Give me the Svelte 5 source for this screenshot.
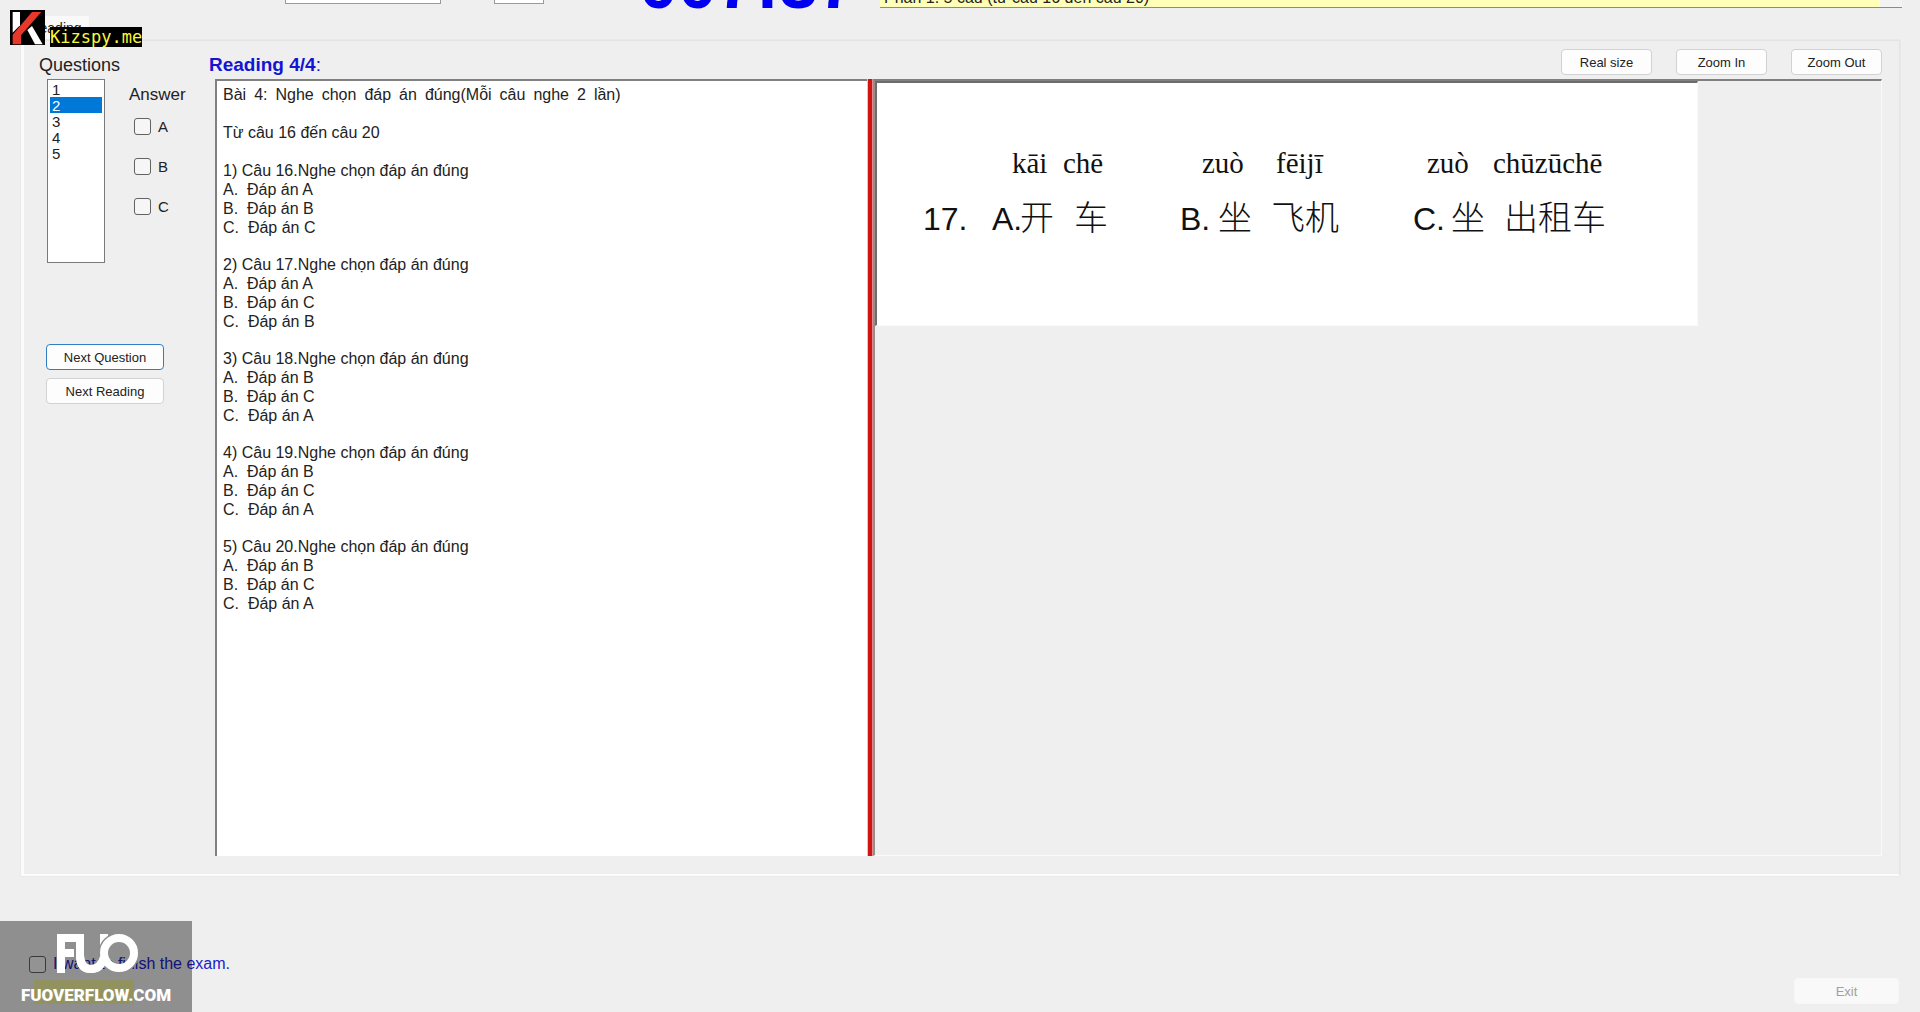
<script>
  let selected = $state([2]);
  let answers = $state({ A: false, B: false, C: false });
  let finish = $state(false);

  const numbers = [1, 2, 3, 4, 5];

  const questions = [
    { no: 16, options: ["A", "B", "C"] },
    { no: 17, options: ["A", "C", "B"] },
    { no: 18, options: ["B", "C", "A"] },
    { no: 19, options: ["B", "C", "A"] },
    { no: 20, options: ["B", "C", "A"] },
  ];

  const letters = ["A", "B", "C"];

  const pinyin = [
    { x: 135, text: "kāi" },
    { x: 186, text: "chē" },
    { x: 325, text: "zuò" },
    { x: 399, text: "fēijī" },
    { x: 550, text: "zuò" },
    { x: 616, text: "chūzūchē" },
  ];

  const latin = [
    { x: 46, text: "17." },
    { x: 115, text: "A." },
    { x: 303, text: "B." },
    { x: 536, text: "C." },
  ];

  const hanzi = [
    { x: 143, text: "开" },
    { x: 197, text: "车" },
    { x: 341, text: "坐" },
    { x: 394, text: "飞机" },
    { x: 574, text: "坐" },
    { x: 627, text: "出租车" },
  ];
</script>

<div class="app">
  <header class="top">
    <select class="combo combo-font" aria-label="Font"></select>
    <select class="combo combo-size" aria-label="Size"></select>
    <div class="timer">007:37</div>
    <div class="notes">
      <p>Phần 1: 5 câu (từ câu 16 đến câu 20)</p>
      <div class="notes-scroll"></div>
    </div>
  </header>

  <nav class="tabs">
    <button class="tab">Reading</button>
  </nav>

  <main class="panel">
    <aside class="side">
      <label class="side-title" for="question-list">Questions</label>
      <div class="side-body">
        <select id="question-list" class="question-list" multiple size="5" bind:value={selected}>
          {#each numbers as number}
            <option value={number}>{number}</option>
          {/each}
        </select>
        <div class="answers">
          <h2>Answer</h2>
          {#each letters as letter}
            <label class="answer">
              <input class="tick" type="checkbox" bind:checked={answers[letter]} />
              {letter}
            </label>
          {/each}
        </div>
      </div>
      <div class="side-buttons">
        <button class="btn btn-focus">Next Question</button>
        <button class="btn">Next Reading</button>
      </div>
    </aside>

    <section class="work">
      <div class="toolbar">
        <h1>Reading 4/4<span>:</span></h1>
        <div class="zoom">
          <button class="btn">Real size</button>
          <button class="btn">Zoom In</button>
          <button class="btn">Zoom Out</button>
        </div>
      </div>

      <div class="split">
        <article class="reading">
          <p>Bài&ensp;4:&ensp;Nghe&ensp;chọn&ensp;đáp&ensp;án&ensp;đúng(Mỗi&ensp;câu&ensp;nghe&ensp;2&ensp;lần)</p>
          <p>Từ câu 16 đến câu 20</p>
          {#each questions as question, i}
            <div class="question">
              <div>{i + 1}) Câu {question.no}.Nghe chọn đáp án đúng</div>
              {#each question.options as option, j}
                <div>{letters[j]}.&nbsp; Đáp án {option}</div>
              {/each}
            </div>
          {/each}
        </article>
        <div class="splitter"></div>
        <div class="viewer">
          <div class="sheet">
            <svg width="820" height="242" viewBox="0 0 820 242">
              {#each pinyin as word}
                <text class="pinyin" x={word.x} y="90">{word.text}</text>
              {/each}
              {#each latin as word}
                <text class="latin" x={word.x} y="147">{word.text}</text>
              {/each}
              {#each hanzi as word}
                <text class="hanzi" x={word.x} y="147">{word.text}</text>
              {/each}
            </svg>
          </div>
        </div>
      </div>
    </section>
  </main>

  <footer class="bottom">
    <div class="finish">
      <label class="finish-label">
        <input class="tick" type="checkbox" bind:checked={finish} />
        I want to finish the exam.
      </label>
      <div class="finish-bar"></div>
    </div>
    <button class="btn exit" disabled>Exit</button>
  </footer>

  <div class="kizspy">
    <svg width="35" height="35" viewBox="0 0 105 105">
      <rect width="105" height="105" fill="#000" />
      <path d="M8 6H30V46L8 68Z" fill="#fff" />
      <path d="M66 6H94L33 76V103H8V74Z" fill="#e8382b" />
      <path d="M52 60L66 48L98 103H75Z" fill="#fff" />
    </svg>
    <span>Kizspy.me</span>
  </div>

  <div class="fuo">
    <svg width="84" height="42" viewBox="0 0 84 42">
      <path d="M3 1H23V9H11V16H20V24H11V40H3Z" fill="#fff" />
      <path d="M26 1V22Q26 36 37 36Q47 36 50 24V1" fill="none" stroke="#fff" stroke-width="8" />
      <circle cx="65" cy="20" r="17" fill="none" stroke="#8f8f8f" stroke-width="7" />
      <circle cx="65" cy="20" r="15" fill="none" stroke="#fff" stroke-width="8" />
      <path d="M26 22Q26 36 37 36Q47 36 50 24" fill="none" stroke="#fff" stroke-width="8" />
    </svg>
    <span>FUOVERFLOW.COM</span>
  </div>
</div>

<style>
  :global(body) {
    margin: 0;
    background: #efefef;
  }

  .app {
    position: relative;
    display: flex;
    flex-direction: column;
    min-height: 100vh;
    overflow: hidden;
    background: #efefef;
    color: #222;
    font-family: "Liberation Sans", Arial, sans-serif;
    font-size: 16px;
  }

  h1,
  h2,
  p {
    margin: 0;
  }

  .top {
    display: flex;
    align-items: flex-end;
    height: 16px;
    padding: 0 18px 0 285px;
    overflow: hidden;
  }

  .combo {
    flex: none;
    box-sizing: border-box;
    height: 24px;
    margin: 0 0 12px;
    border: 1px solid #9a9a9a;
    border-radius: 0;
    background: #fff;
  }

  .combo-font {
    width: 156px;
  }

  .combo-size {
    width: 50px;
    margin-left: 53px;
  }

  .timer {
    flex: none;
    width: 241px;
    margin-left: 95px;
    color: #0000f0;
    font-size: 70px;
    font-weight: bold;
    line-height: 64px;
  }

  .notes {
    flex: 1;
    display: flex;
    height: 40px;
    margin-bottom: 8px;
    border-bottom: 1px solid #8a8a8a;
    background: #ffffb8;
  }

  .notes p {
    flex: 1;
    align-self: flex-end;
    padding-left: 4px;
    line-height: 18px;
    font-size: 16px;
  }

  .notes-scroll {
    width: 22px;
    background: #f3f3f3;
  }

  .tabs {
    height: 24px;
    padding-left: 22px;
  }

  .tab {
    width: 67px;
    height: 24px;
    padding: 0;
    border: 0;
    background: #f9f9f9;
    color: #222;
    font: 14px "Liberation Sans", Arial, sans-serif;
  }

  .panel {
    flex: 1;
    display: grid;
    grid-template-columns: 185px 1fr;
    margin: 0 20px 0 21px;
    padding: 0 17px 18px 0;
    border: 1px solid #e4e4e4;
    border-left: 3px solid #fbfbfb;
    border-bottom: 2px solid #fbfbfb;
    box-shadow: 0 0 0 1px #e9e9e9;
  }

  .side-title {
    display: block;
    height: 38px;
    padding-left: 15px;
    font-size: 18px;
    line-height: 48px;
  }

  .side-body {
    display: flex;
    gap: 24px;
    padding-left: 23px;
  }

  .question-list {
    box-sizing: border-box;
    width: 58px;
    height: 184px;
    padding: 1px 2px;
    border: 1px solid #7a7a7a;
    border-radius: 0;
    outline: 0;
    overflow: hidden;
    background: #fff;
    font: 15px "Liberation Sans", Arial, sans-serif;
  }

  .question-list option {
    box-sizing: border-box;
    height: 16px;
    min-height: 0;
    padding: 0 2px;
    color: #222;
    line-height: 16px;
  }

  .question-list option:checked {
    background: #0078d7 linear-gradient(#0078d7, #0078d7);
    color: #fff;
  }

  .answers {
    padding-top: 4px;
  }

  .answers h2 {
    margin-bottom: 2px;
    font-size: 17px;
    font-weight: normal;
    line-height: 24px;
  }

  .answer {
    display: flex;
    align-items: center;
    gap: 7px;
    height: 34px;
    margin-bottom: 6px;
    padding-left: 5px;
    font-size: 15px;
  }

  .tick {
    appearance: none;
    flex: none;
    box-sizing: border-box;
    width: 17px;
    height: 17px;
    margin: 0;
    border: 1px solid #626262;
    border-radius: 3px;
    background: #f6f6f6;
  }

  .tick:checked {
    background: #0078d7;
  }

  .side-buttons {
    display: grid;
    gap: 8px;
    width: 118px;
    padding: 81px 0 0 22px;
  }

  .btn {
    height: 26px;
    padding: 0;
    border: 1px solid #d2d2d2;
    border-radius: 4px;
    background: #fdfdfd;
    color: #222;
    font: 13px "Liberation Sans", Arial, sans-serif;
  }

  .btn-focus {
    border-color: #2f7fc4;
  }

  .work {
    display: flex;
    flex-direction: column;
  }

  .toolbar {
    display: flex;
    justify-content: space-between;
    height: 38px;
  }

  .toolbar h1 {
    color: #1414d2;
    font-size: 19px;
    line-height: 48px;
  }

  .toolbar h1 span {
    font-weight: normal;
  }

  .zoom {
    display: flex;
    gap: 24px;
    padding-top: 8px;
  }

  .zoom .btn {
    width: 91px;
  }

  .split {
    flex: 1;
    display: grid;
    grid-template-columns: 652fr 6px 1008fr;
    padding-left: 6px;
  }

  .reading {
    padding: 4px 6px;
    border-top: 2px solid #808080;
    border-left: 2px solid #808080;
    background: #fff;
    line-height: 19px;
  }

  .reading p {
    margin-bottom: 19px;
  }

  .question {
    margin-bottom: 18px;
  }

  .splitter {
    border-right: 1px solid #e08a8a;
    border-left: 1px solid #f0c0c0;
    background: #cf1414;
  }

  .viewer {
    border: 1px solid #fafafa;
    border-top: 2px solid #808080;
    border-left: 2px solid #909090;
  }

  .sheet {
    width: 820px;
    max-width: 100%;
    border: 1px solid #fafafa;
    border-top: 2px solid #6c6c6c;
    border-left: 2px solid #6c6c6c;
    background: #fff;
  }

  .sheet svg {
    display: block;
    max-width: 100%;
  }

  .pinyin {
    fill: #111;
    font-family: "Liberation Serif", "Times New Roman", serif;
    font-size: 29px;
  }

  .latin {
    fill: #111;
    font-size: 32px;
  }

  .hanzi {
    fill: #111;
    font-family: "Noto Sans CJK SC", sans-serif;
    font-size: 34px;
    font-weight: 300;
  }

  .bottom {
    display: flex;
    justify-content: space-between;
    align-items: flex-end;
    height: 136px;
    padding: 0 21px 0 29px;
  }

  .finish-label {
    display: flex;
    align-items: center;
    gap: 7px;
    height: 24px;
    color: #2020c8;
  }

  .finish-bar {
    width: 100px;
    height: 24px;
    margin: 4px 0 8px 5px;
    background: #f4f4a0;
  }

  .exit {
    width: 105px;
    margin-bottom: 8px;
    border-color: #f7f7f7;
    background: #f9f9f9;
    color: #a0a0a0;
  }

  .kizspy {
    position: absolute;
    top: 10px;
    left: 10px;
    display: flex;
    align-items: flex-end;
    gap: 5px;
  }

  .kizspy span {
    margin-bottom: -2px;
    background: #000;
    color: #f8f83c;
    font: 17px "DejaVu Sans Mono", monospace;
    line-height: 20px;
  }

  .fuo {
    position: absolute;
    bottom: 0;
    left: 0;
    display: flex;
    flex-direction: column;
    align-items: center;
    gap: 6px;
    box-sizing: border-box;
    width: 192px;
    height: 91px;
    padding-top: 12px;
    background: rgba(0, 0, 0, 0.4);
    color: #fff;
  }

  .fuo span {
    font-family: Roboto, "Liberation Sans", sans-serif;
    font-size: 17px;
    font-weight: 900;
    line-height: 28px;
  }
</style>
